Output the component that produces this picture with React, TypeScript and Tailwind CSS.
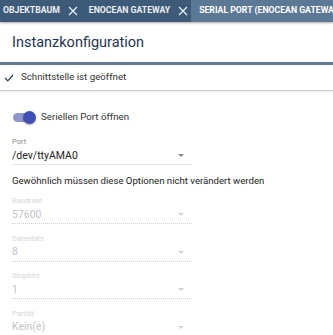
const font = { fontFamily: "Roboto, 'Liberation Sans', sans-serif" };

function Tab({ label, active, first }: { label: string; active?: boolean; first?: boolean }) {
  if (active) {
    return (
      <div className="flex items-center h-full flex-1 whitespace-nowrap text-[8.7px] font-bold bg-[#5b7895] text-white pl-[8px]">
        {label}
      </div>
    );
  }
  return (
    <div
      className={`flex items-center h-full shrink-0 whitespace-nowrap text-[8.7px] font-bold text-white/90 pr-[3px] ${
        first ? "pl-[3px]" : "pl-[8px]"
      }`}
    >
      {label}
      <svg width="10" height="10" viewBox="0 0 10 10" className="ml-[8px]">
        <path d="M1 1L9 9M9 1L1 9" stroke="#e6ecf2" strokeWidth="1.3" />
      </svg>
    </div>
  );
}

function Field({ label, value, disabled }: { label: string; value: string; disabled?: boolean }) {
  return (
    <div className="w-[180px]">
      <div className={`text-[7.5px] leading-[10px] ${disabled ? "text-[#d6d6d6]" : "text-[#8a8a8a]"}`}>{label}</div>
      <div
        className={`flex items-center justify-between h-[18px] border-b ${
          disabled ? "border-dotted border-[#d0d0d0]" : "border-[#e4e4e4]"
        }`}
      >
        <span className={`text-[10.5px] ${disabled ? "text-[#c4c4c4]" : "text-[#222]"}`}>{value}</span>
        <svg width="6" height="3" viewBox="0 0 6 3" className="mr-[8px]">
          <path d="M0 0h6L3 3z" fill={disabled ? "#d4d4d4" : "#888"} />
        </svg>
      </div>
    </div>
  );
}

export default function App() {
  return (
    <div className="w-[333px] h-[335px] bg-white overflow-hidden" style={font}>
      <div className="flex h-[22px] bg-[#3d5b79] shadow-[0_1px_2px_rgba(0,0,0,0.35)] overflow-hidden">
        <Tab label="OBJEKTBAUM" first />
        <Tab label="ENOCEAN GATEWAY" />
        <Tab label="SERIAL PORT (ENOCEAN GATEWAY)" active />
      </div>
      <div className="pl-[12px] pt-[12px] h-[40px] text-[14.5px] leading-[18px] text-[#1e3550]">Instanzkonfiguration</div>
      <div className="h-[3px] bg-[#5f7b96]" />
      <div className="flex items-center h-[26px] border-b border-[#c8d2dc] shadow-[0_1px_1px_rgba(0,0,0,0.06)] pl-[4px]">
        <svg width="10" height="8" viewBox="0 0 10 8" className="mr-[7px]">
          <path d="M1 4L3.8 6.8L9 1" fill="none" stroke="#2a3f55" strokeWidth="1.2" />
        </svg>
        <span className="text-[9.7px] text-[#333]">Schnittstelle ist geöffnet</span>
      </div>
      <div className="pl-[12px] pt-[18px]">
        <div className="flex items-center h-[16px]">
          <div className="relative w-[25px] h-[16px] mr-[4px]">
            <div className="absolute left-[1px] top-[3.5px] w-[22px] h-[9px] rounded-full bg-[#8d97cc]" />
            <div className="absolute right-[1px] top-[1.5px] w-[13px] h-[13px] rounded-full bg-[#3f51b5] shadow-[0_1px_2px_rgba(0,0,0,0.35)]" />
          </div>
          <span className="text-[9.7px] text-[#333]">Seriellen Port öffnen</span>
        </div>
        <div className="mt-[12px]">
          <Field label="Port" value="/dev/ttyAMA0" />
        </div>
        <div className="mt-[9px] text-[9.6px] leading-[14px] text-[#222]">Gewöhnlich müssen diese Optionen nicht verändert werden</div>
        <div className="flex flex-col gap-[9.5px] mt-[8px]">
          <Field label="Baudrate" value="57600" disabled />
          <Field label="Datenbits" value="8" disabled />
          <Field label="Stopbits" value="1" disabled />
          <Field label="Parität" value="Kein(e)" disabled />
        </div>
      </div>
    </div>
  );
}
